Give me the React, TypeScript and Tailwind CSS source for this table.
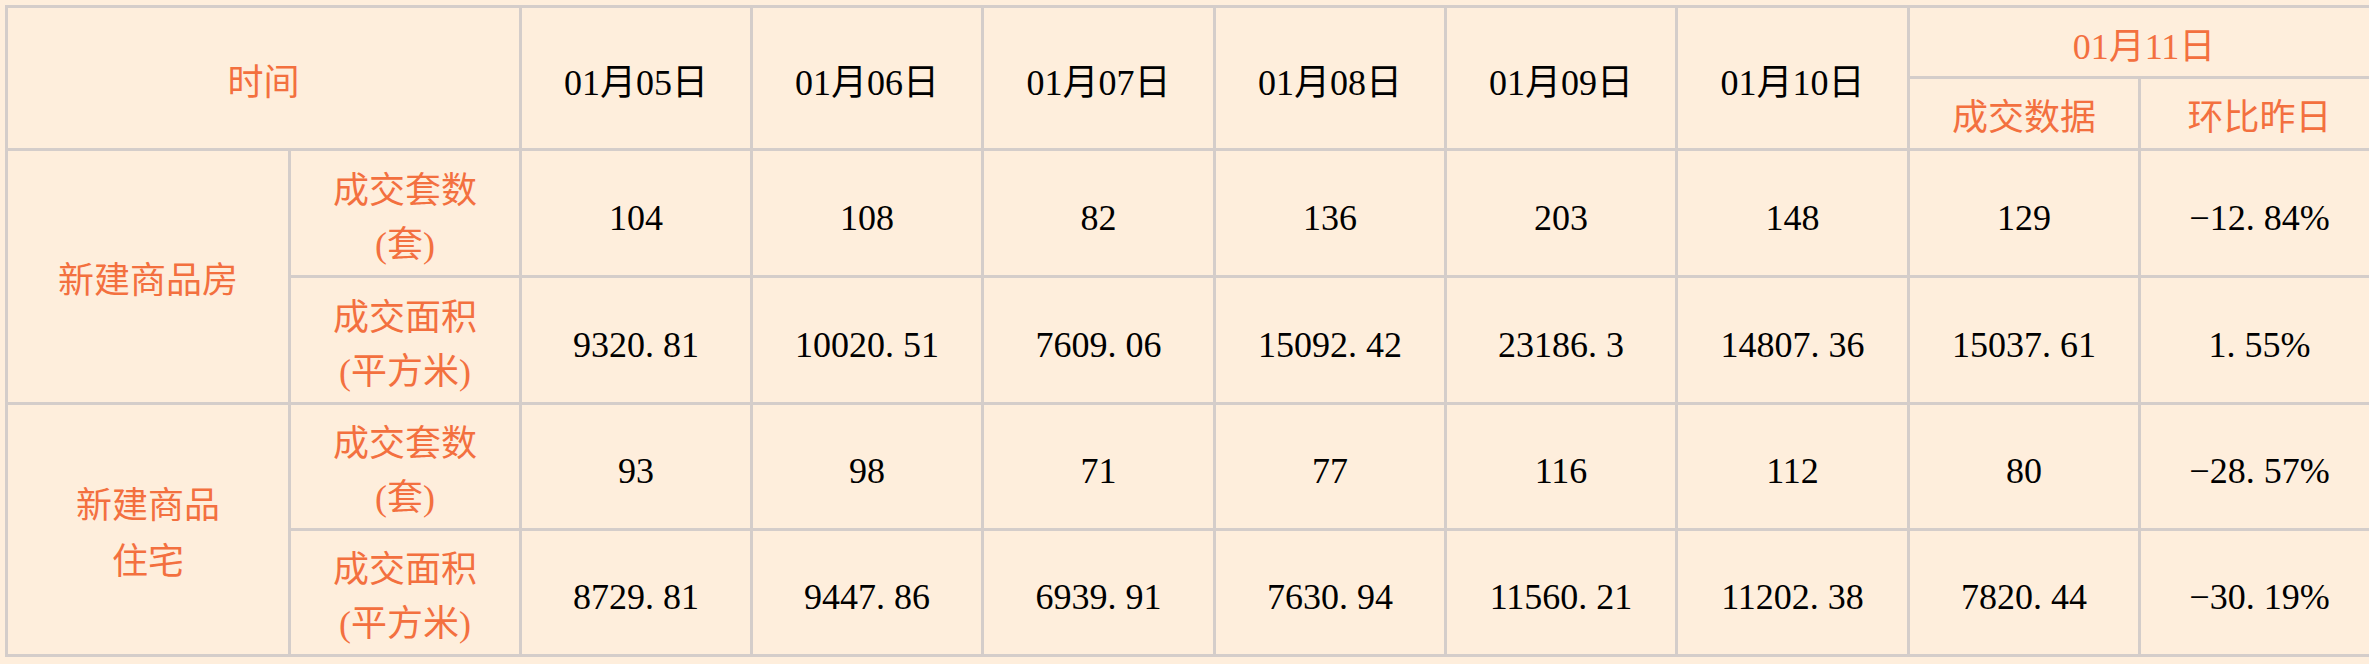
import React from "react";

const FONT = { fontFamily: '"Liberation Serif", "Noto Sans CJK SC", serif' };

const dates = ["01月05日", "01月06日", "01月07日", "01月08日", "01月09日", "01月10日"];

const rows: { group: number; label: [string, string]; values: string[] }[] = [
  { group: 0, label: ["成交套数", "(套)"], values: ["104", "108", "82", "136", "203", "148", "129", "−12.84%"] },
  { group: 0, label: ["成交面积", "(平方米)"], values: ["9320.81", "10020.51", "7609.06", "15092.42", "23186.3", "14807.36", "15037.61", "1.55%"] },
  { group: 1, label: ["成交套数", "(套)"], values: ["93", "98", "71", "77", "116", "112", "80", "−28.57%"] },
  { group: 1, label: ["成交面积", "(平方米)"], values: ["8729.81", "9447.86", "6939.91", "7630.94", "11560.21", "11202.38", "7820.44", "−30.19%"] },
];

const cell =
  "flex items-center justify-center text-center border-r-[3px] border-b-[3px] border-[#d4cdca] leading-[54px] pt-[9px]";

function Num({ v }: { v: string }) {
  const i = v.indexOf(".");
  if (i < 0) return <span>{v}</span>;
  return (
    <span>
      {v.slice(0, i)}
      <span className="mr-[9px]">.</span>
      {v.slice(i + 1)}
    </span>
  );
}

export default function App() {
  return (
    <div
      className="w-[2369px] h-[664px] overflow-hidden bg-[#feeedc] pt-[5px] pl-[5px] text-[36px]"
      style={FONT}
    >
      <div className="grid w-max grid-cols-[283px_231px_231px_231px_232px_231px_231px_232px_231px_240px] grid-rows-[71px_72px_127px_127px_126px_126px] border-l-[3px] border-t-[3px] border-[#d4cdca]">
        <div className={`${cell} col-start-1 col-span-2 row-start-1 row-span-2 text-[#f3703f]`}>时间</div>
        {dates.map((d, i) => (
          <div
            key={d}
            className={`${cell} row-start-1 row-span-2 text-black`}
            style={{ gridColumnStart: i + 3 }}
          >
            {d}
          </div>
        ))}
        <div className={`${cell} col-start-9 col-span-2 row-start-1 text-[#f3703f]`}>01月11日</div>
        <div className={`${cell} col-start-9 row-start-2 text-[#f3703f]`}>成交数据</div>
        <div className={`${cell} col-start-10 row-start-2 text-[#f3703f]`}>环比昨日</div>

        <div className={`${cell} col-start-1 row-start-3 row-span-2 text-[#f3703f]`}>新建商品房</div>
        <div className={`${cell} col-start-1 row-start-5 row-span-2 text-[#f3703f] leading-[56px]`}>
          新建商品
          <br />
          住宅
        </div>

        {rows.map((r, ri) => (
          <React.Fragment key={ri}>
            <div
              className={`${cell} col-start-2 text-[#f3703f]`}
              style={{ gridRowStart: ri + 3 }}
            >
              <div>
                {r.label[0]}
                <br />
                {r.label[1]}
              </div>
            </div>
            {r.values.map((v, vi) => (
              <div
                key={vi}
                className={`${cell} text-black`}
                style={{ gridRowStart: ri + 3, gridColumnStart: vi + 3 }}
              >
                <Num v={v} />
              </div>
            ))}
          </React.Fragment>
        ))}
      </div>
    </div>
  );
}
